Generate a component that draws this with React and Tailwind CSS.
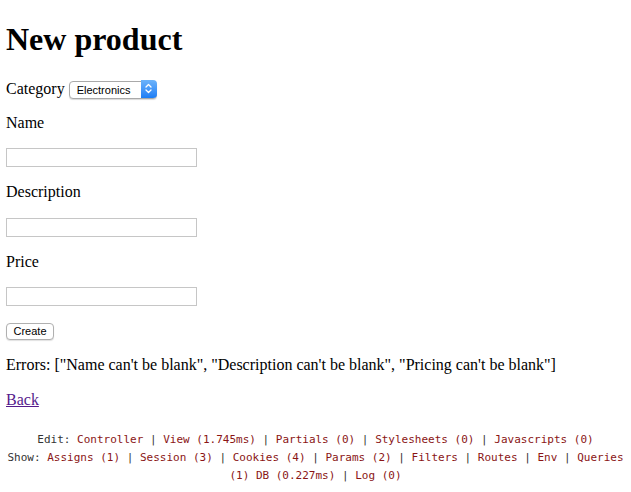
import React from "react";

const footerLink = "text-[#8a1515]";

export default function App() {
  return (
    <div className="bg-white min-h-[492px] px-[6px] pb-2 font-['Liberation_Serif',serif] text-[16px] text-black">
      <h1 className="mt-[21.44px] mb-[21.44px] text-[32px] font-bold leading-[36.8px]">
        New product
      </h1>

      <p className="my-4 leading-[18.4px]">
        Category{" "}
        <span className="relative inline-block h-[18px] align-top">
          <select
            defaultValue="Electronics"
            className="appearance-none h-[18px] w-[88px] pl-[7px] rounded-[4px] border border-[#a9a9a9] bg-white shadow-[0_1px_1px_rgba(0,0,0,0.15)] font-['Liberation_Sans',sans-serif] text-[11px] leading-[16px] text-black"
          >
            <option>Electronics</option>
            <option>Books</option>
          </select>
          <span className="pointer-events-none absolute right-0 top-0 flex h-[18px] w-[16px] items-center justify-center rounded-r-[4px] bg-gradient-to-b from-[#6cb3fa] to-[#1a7df5]">
            <svg width="7" height="11" viewBox="0 0 7 11" fill="none">
              <path d="M1 4 L3.5 1.5 L6 4" stroke="white" strokeWidth="1.3" strokeLinecap="round" strokeLinejoin="round" />
              <path d="M1 7 L3.5 9.5 L6 7" stroke="white" strokeWidth="1.3" strokeLinecap="round" strokeLinejoin="round" />
            </svg>
          </span>
        </span>
      </p>

      <p className="my-4 leading-[18.4px]">Name</p>
      <p className="my-4 leading-none">
        <input type="text" className="h-[19px] w-[191px] border border-[#c6c6c6] bg-white" />
      </p>

      <p className="my-4 leading-[18.4px]">Description</p>
      <p className="my-4 leading-none">
        <input type="text" className="h-[19px] w-[191px] border border-[#c6c6c6] bg-white" />
      </p>

      <p className="my-4 leading-[18.4px]">Price</p>
      <p className="my-4 leading-none">
        <input type="text" className="h-[19px] w-[191px] border border-[#c6c6c6] bg-white" />
      </p>

      <p className="my-4 leading-none">
        <button className="h-[17px] w-[48px] rounded-[4px] border border-[#b0b0b0] bg-white shadow-[0_1px_1px_rgba(0,0,0,0.12)] font-['Liberation_Sans',sans-serif] text-[11px] leading-[15px] text-black">
          Create
        </button>
      </p>

      <p className="my-4 leading-[18.4px]">
        Errors: ["Name can't be blank", "Description can't be blank", "Pricing can't be blank"]
      </p>

      <p className="my-4 leading-[18.4px]">
        <a href="#" className="text-[#551a8b] underline">Back</a>
      </p>

      {/* debug bar */}
      <div className="mt-[22px] text-center font-['DejaVu_Sans_Mono',monospace] text-[11px] leading-[18px] text-[#333]">
        <div>
          Edit: <a className={footerLink}>Controller</a> | <a className={footerLink}>View (1.745ms)</a> | <a className={footerLink}>Partials (0)</a> | <a className={footerLink}>Stylesheets (0)</a> | <a className={footerLink}>Javascripts (0)</a>
        </div>
        <div>
          Show: <a className={footerLink}>Assigns (1)</a> | <a className={footerLink}>Session (3)</a> | <a className={footerLink}>Cookies (4)</a> | <a className={footerLink}>Params (2)</a> | <a className={footerLink}>Filters</a> | <a className={footerLink}>Routes</a> | <a className={footerLink}>Env</a> | <a className={footerLink}>Queries</a> <a className={footerLink}>(1) DB (0.227ms)</a> | <a className={footerLink}>Log (0)</a>
        </div>
      </div>
    </div>
  );
}
